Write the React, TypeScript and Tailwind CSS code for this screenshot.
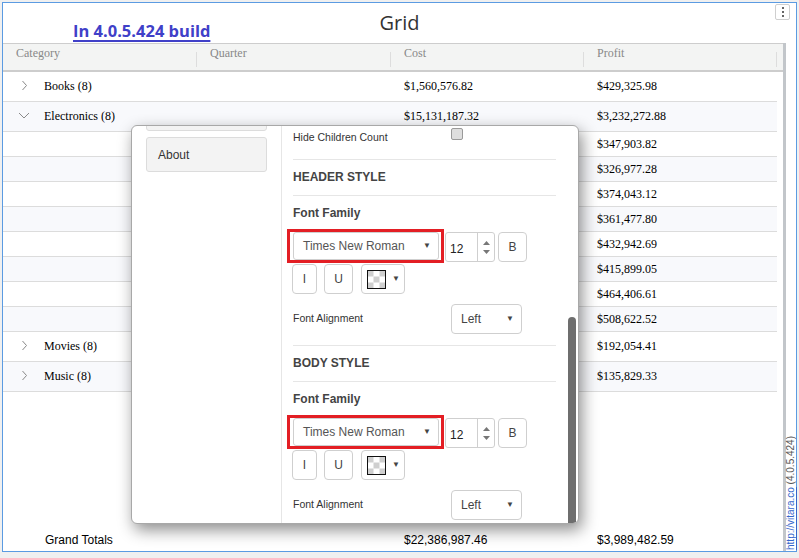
import React from "react";

const serif = "font-['Liberation_Serif','Times_New_Roman',serif]";
const sans = "font-['Liberation_Sans',Arial,sans-serif]";

type Row = {
  name?: string;
  open?: boolean;
  group?: boolean;
  cost?: string;
  profit: string;
};

const rows: Row[] = [
  { name: "Books (8)", group: true, cost: "$1,560,576.82", profit: "$429,325.98" },
  { name: "Electronics (8)", group: true, open: true, cost: "$15,131,187.32", profit: "$3,232,272.88" },
  { profit: "$347,903.82" },
  { profit: "$326,977.28" },
  { profit: "$374,043.12" },
  { profit: "$361,477.80" },
  { profit: "$432,942.69" },
  { profit: "$415,899.05" },
  { profit: "$464,406.61" },
  { profit: "$508,622.52" },
  { name: "Movies (8)", group: true, profit: "$192,054.41" },
  { name: "Music (8)", group: true, profit: "$135,829.33" },
];

function Chevron({ open }: { open?: boolean }) {
  if (open) {
    return (
      <svg width="12" height="7" viewBox="0 0 12 7">
        <polyline points="1,1 6,6 11,1" fill="none" stroke="#8a8a8a" strokeWidth="1" />
      </svg>
    );
  }
  return (
    <svg width="7" height="11" viewBox="0 0 7 11">
      <polyline points="1.5,1 5.5,5.5 1.5,10" fill="none" stroke="#8a8a8a" strokeWidth="1" />
    </svg>
  );
}

function GridRow({ row, index }: { row: Row; index: number }) {
  return (
    <div
      className={`grid grid-cols-[194px_194px_193px_193px] border-b border-[#dcdcdc] items-center text-[12px] leading-[14px] text-black ${
        row.group ? "h-[30px] pb-[1px]" : "h-[25px]"
      } ${index % 2 === 1 ? "bg-[#f8f9fc]" : "bg-white"}`}
    >
      <div className="flex items-center pl-[13px]">
        {row.group && (
          <>
            <div className="w-[16px] flex justify-center -mt-[2px]">
              <Chevron open={row.open} />
            </div>
            <span className="ml-[12px]">{row.name}</span>
          </>
        )}
      </div>
      <div />
      <div className="pl-[13px]">{row.cost}</div>
      <div className="pl-[13px]">{row.profit}</div>
    </div>
  );
}

function Arrow() {
  return <span className="text-[8px] text-[#444] leading-none">▼</span>;
}

function FontSelect() {
  return (
    <div className="-ml-[6px] border-[3px] border-[#e31e24] pl-[3px] pr-[2px]">
      <div className="w-[146px] h-[28px] border border-[#cfcfcf] rounded-[3px] flex items-center justify-between pl-[9px] pr-[7px]">
        <span className="text-[12px] text-[#555]">Times New Roman</span>
        <Arrow />
      </div>
    </div>
  );
}

function Swatch() {
  return (
    <svg width="19" height="19" viewBox="0 0 19 19">
      <rect x="0" y="0" width="19" height="19" fill="#fff" />
      <rect x="0.5" y="0.5" width="6" height="6" fill="#cfcfcf" />
      <rect x="12.5" y="0.5" width="6" height="6" fill="#cfcfcf" />
      <rect x="6.5" y="6.5" width="6" height="6" fill="#cfcfcf" />
      <rect x="0.5" y="12.5" width="6" height="6" fill="#cfcfcf" />
      <rect x="12.5" y="12.5" width="6" height="6" fill="#cfcfcf" />
      <rect x="0.5" y="0.5" width="18" height="18" fill="none" stroke="#111" strokeWidth="1" />
    </svg>
  );
}

function StyleBlock({ title }: { title: string }) {
  const btn = "border border-[#cfcfcf] rounded-[4px] flex items-center justify-center text-[12px] text-[#444]";
  return (
    <div>
      <div className="h-[36px] flex items-center pb-[1px] text-[12px] font-bold text-[#444] border-b border-[#e6e6e6]">
        {title}
      </div>
      <div className="pt-[10px] leading-[14px] text-[12px] font-bold text-[#444]">Font Family</div>
      <div className="mt-[9px] flex items-start">
        <FontSelect />
        <div className="ml-[1px] mt-[3px] w-[50px] h-[30px] border border-[#cfcfcf] rounded-[3px] flex">
          <div className="flex-1 flex items-center pl-[4px] pt-[3px] text-[12px] text-[#222]">12</div>
          <div className="w-[17px] border-l border-[#cfcfcf] flex flex-col items-center justify-center gap-[5px]">
            <svg width="7" height="4" viewBox="0 0 7 4"><polygon points="0,4 3.5,0 7,4" fill="#777" /></svg>
            <svg width="7" height="4" viewBox="0 0 7 4"><polygon points="0,0 3.5,4 7,0" fill="#777" /></svg>
          </div>
        </div>
        <div className={`ml-[3px] mt-[3px] w-[29px] h-[30px] ${btn}`}>B</div>
      </div>
      <div className="mt-[1px] -ml-[1px] flex gap-[7px]">
        <div className={`${btn} h-[30px] w-[25px]`}>I</div>
        <div className={`${btn} h-[30px] w-[29px]`}>U</div>
        <div className={`${btn} h-[30px] w-[44px] justify-start pl-[5px] gap-[6px] ml-[1px]`}>
          <Swatch />
          <Arrow />
        </div>
      </div>
      <div className="mt-[10px] flex items-center">
        <div className="w-[158px] text-[10.5px] text-[#333]">Font Alignment</div>
        <div className="w-[71px] h-[30px] border border-[#cfcfcf] rounded-[4px] flex items-center justify-between pl-[9px] pr-[7px]">
          <span className="text-[12px] text-[#444]">Left</span>
          <Arrow />
        </div>
      </div>
      <div className="mt-[11px] border-b border-[#e6e6e6]" />
    </div>
  );
}

function SettingsPopup() {
  return (
    <div
      className={`absolute left-[131px] top-[125px] w-[448px] h-[399px] bg-white rounded-[6px] border border-[#a8a8a8] shadow-[3px_6px_16px_rgba(0,0,0,0.45)] overflow-hidden flex ${sans}`}
    >
      <div className="w-[150px] border-r border-[#e6e6e6] px-[14px]">
        <div className="-mt-[29px] h-[34px] rounded-[3px] border border-[#dcdcdc] bg-[#f3f3f3]" />
        <div className="mt-[6px] h-[35px] rounded-[3px] border border-[#dcdcdc] bg-[#f3f3f3] flex items-center pl-[11px] text-[12px] text-[#333]">
          About
        </div>
      </div>
      <div className="flex-1 flex">
        <div className="flex-1 pl-[11px] pr-[12px]">
          <div className="flex items-start">
            <div className="w-[158px] mt-[4px] leading-[14px] text-[10.5px] text-[#333]">Hide Children Count</div>
            <div className="mt-[2px] w-[12px] h-[12px] rounded-[2px] border border-[#9a9a9a] bg-[#dedede]" />
          </div>
          <div className="mt-[15px] border-b border-[#e6e6e6]" />
          <StyleBlock title="HEADER STYLE" />
          <StyleBlock title="BODY STYLE" />
        </div>
        <div className="w-[10px] pr-[2px]">
          <div className="mt-[191px] h-[210px] w-[8px] rounded-[4px] bg-[#6e6e6e]" />
        </div>
      </div>
    </div>
  );
}

export default function App() {
  return (
    <div className="relative w-[799px] h-[558px] bg-[#f0f0f0] pt-[2px] px-[2px] overflow-hidden">
      <div className="h-[550px] border border-[#5b9be2] bg-white flex flex-col">
        <div className="h-[40px] grid grid-cols-[1fr_auto_1fr]">
          <div className="pl-[70px] pt-[16px]">
            <a
              href="#"
              className="font-['Open_Sans',sans-serif] font-bold text-[16.5px] leading-[22px] text-[#4040c8] underline decoration-2 underline-offset-[3px]"
            >
              In 4.0.5.424 build
            </a>
          </div>
          <div className="pt-[7px] font-['Open_Sans',sans-serif] text-[20px] leading-[26px] text-[#333]">Grid</div>
          <div className="flex justify-end pr-[6px] pt-[1px]">
            <div className="w-[15px] h-[16px] border border-[#cfcfcf] rounded-[2px] flex flex-col items-center justify-center gap-[2px]">
              <div className="w-[2px] h-[2px] bg-[#666]" />
              <div className="w-[2px] h-[2px] bg-[#666]" />
              <div className="w-[2px] h-[2px] bg-[#666]" />
            </div>
          </div>
        </div>
        <div className="flex-1 flex">
          <div className={`w-[784px] border-r-[3px] border-[#c2c6ca] flex flex-col ${serif}`}>
            <div className="h-[29px] border-t border-b-2 border-[#cdcdcd] bg-[#f3f4f3] grid grid-cols-[194px_194px_193px_193px] text-[12px] text-[#888]">
              {["Category", "Quarter", "Cost", "Profit"].map((h) => (
                <div key={h} className="flex justify-between">
                  <span className="pl-[13px] leading-[18px]">{h}</span>
                  <div className="w-px h-[15px] mt-[8px] bg-[#dddddd]" />
                </div>
              ))}
            </div>
            <div className="mr-[6px]">
              {rows.map((r, i) => (
                <GridRow key={i} row={r} index={i} />
              ))}
            </div>
            <div className="flex-1" />
            <div className={`h-[22px] pb-[1px] mr-[6px] grid grid-cols-[194px_194px_193px_193px] items-center text-[12px] text-black ${sans}`}>
              <div className="pl-[42px]">Grand Totals</div>
              <div />
              <div className="pl-[13px]">$22,386,987.46</div>
              <div className="pl-[13px]">$3,989,482.59</div>
            </div>
          </div>
          <div className={`flex-1 flex flex-col justify-end items-center pb-[1px] ${sans}`}>
            <div className="[writing-mode:vertical-rl] rotate-180 text-[10px] leading-[10px] whitespace-nowrap">
              <a href="#" className="text-[#3366cc] underline">http://vitara.co</a>
              <span className="text-[#555]"> (4.0.5.424)</span>
            </div>
          </div>
        </div>
      </div>
      <SettingsPopup />
    </div>
  );
}
